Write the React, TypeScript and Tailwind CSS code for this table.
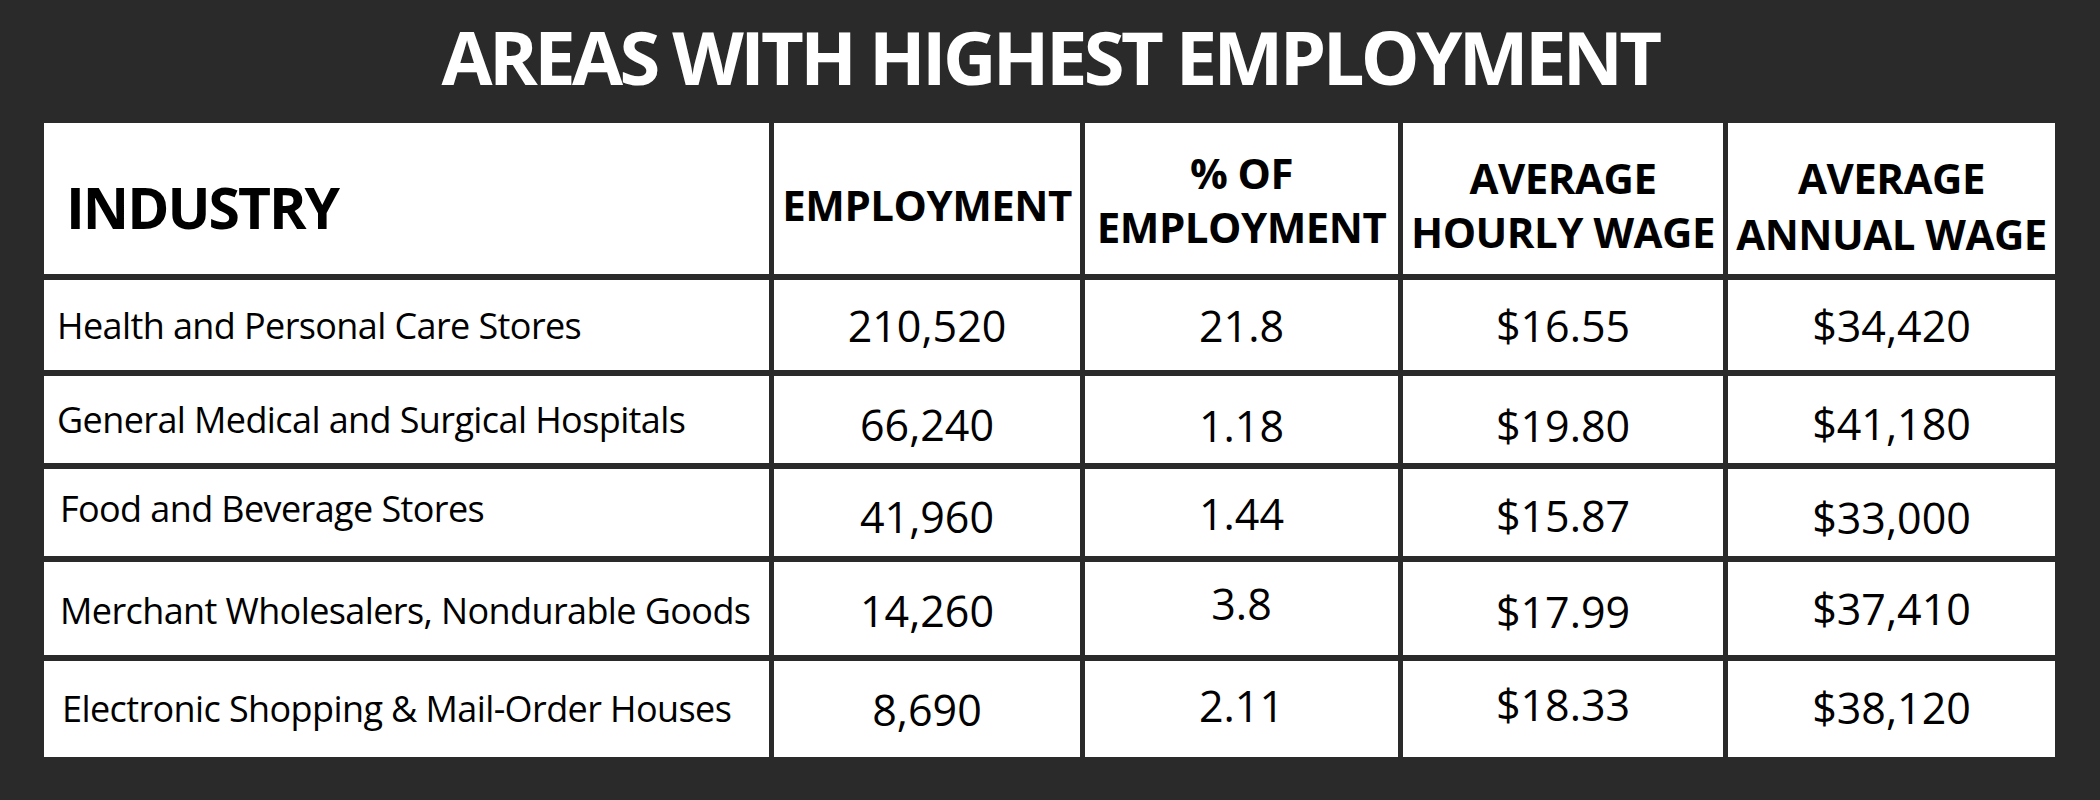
const rows = [
  {
    label: 'Health and Personal Care Stores',
    pad: 'pl-[13px] pt-[2px]',
    values: ['210,520', '21.8', '$16.55', '$34,420'],
    nudge: ['', '', '', ''],
  },
  {
    label: 'General Medical and Surgical Hospitals',
    pad: 'pl-[13px]',
    values: ['66,240', '1.18', '$19.80', '$41,180'],
    nudge: ['pt-[10px]', 'pt-[12px]', 'pt-[12px]', 'pt-[8px]'],
  },
  {
    label: 'Food and Beverage Stores',
    pad: 'pl-[16px] pb-[8px]',
    values: ['41,960', '1.44', '$15.87', '$33,000'],
    nudge: ['pt-[8px]', 'pt-[2px]', 'pt-[6px]', 'pt-[10px]'],
  },
  {
    label: 'Merchant Wholesalers, Nondurable Goods',
    pad: 'pl-[16px] pt-[4px]',
    values: ['14,260', '3.8', '$17.99', '$37,410'],
    nudge: ['pt-[4px]', 'pb-[10px]', 'pt-[6px]', ''],
  },
  {
    label: 'Electronic Shopping & Mail-Order Houses',
    pad: 'pl-[18px]',
    values: ['8,690', '2.11', '$18.33', '$38,120'],
    nudge: ['', 'pb-[8px]', 'pb-[10px]', 'pb-[4px]'],
  },
]

export default function App() {
  return (
    <div className="w-[2100px] h-[800px] bg-[#2a2a2a] font-['Open_Sans',sans-serif] text-black">
      {/* Title */}
      <div className="h-[123px] pt-[20px] text-center">
        <h1 className="text-[74px] leading-none font-bold text-white tracking-[-3.6px]">
          AREAS WITH HIGHEST EMPLOYMENT
        </h1>
      </div>

      {/* Table */}
      <div className="ml-[44px] w-[2011px] grid grid-cols-[725px_306px_313px_320px_327px] grid-rows-[151px_90px_87px_87px_93px_96px] gap-x-[5px] gap-y-[6px]">
        {/* Header */}
        <div className="bg-white flex items-center pl-[22px] pt-[17px]">
          <span className="text-[57px] leading-none font-bold tracking-[-2px]">INDUSTRY</span>
        </div>
        <div className="bg-white flex items-center justify-center pt-[12px]">
          <span className="text-[42px] leading-none font-bold tracking-[-0.5px]">EMPLOYMENT</span>
        </div>
        <div className="bg-white flex items-center justify-center pt-[3px] text-center">
          <span className="text-[42px] leading-[54px] font-bold tracking-[-0.5px]">
            % OF
            <br />
            EMPLOYMENT
          </span>
        </div>
        <div className="bg-white flex items-center justify-center pt-[12px] text-center">
          <span className="text-[42px] leading-[54px] font-bold tracking-[-0.5px]">
            AVERAGE
            <br />
            HOURLY WAGE
          </span>
        </div>
        <div className="bg-white flex items-center justify-center pt-[14px] text-center">
          <span className="text-[42px] leading-[56px] font-bold tracking-[-0.5px]">
            AVERAGE
            <br />
            ANNUAL WAGE
          </span>
        </div>

        {/* Body */}
        {rows.map(r => (
          <div key={r.label} className="contents">
            <div className={`bg-white flex items-center ${r.pad}`}>
              <span className="text-[36px] leading-none tracking-[-0.6px] whitespace-nowrap">{r.label}</span>
            </div>
            {r.values.map((v, i) => (
              <div key={i} className={`bg-white flex items-center justify-center ${r.nudge[i]}`}>
                <span className="text-[43px] leading-none">{v}</span>
              </div>
            ))}
          </div>
        ))}
      </div>
    </div>
  )
}
